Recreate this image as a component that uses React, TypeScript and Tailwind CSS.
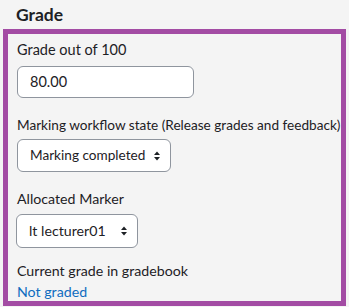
import React from "react";

function Arrows() {
  return (
    <svg width="8" height="12" viewBox="0 0 8 12" className="shrink-0">
      <path d="M4 1.5 L7 5 H1 Z" fill="#1d2125" />
      <path d="M4 10.5 L7 7 H1 Z" fill="#1d2125" />
    </svg>
  );
}

export default function App() {
  const font = { fontFamily: 'Lato, "Noto Sans", sans-serif' };
  return (
    <div className="w-[349px] h-[307px] bg-[#f4f4f4] overflow-hidden text-[#1d2125]" style={font}>
      <div className="h-[29px] pl-[16px] pt-[4px] text-[17.5px] font-bold leading-[22px]">Grade</div>
      <div className="mx-[3px] h-[277px] border-[5px] border-[#a34ca4] overflow-hidden px-[9px] pt-[5px]">
        <div className="text-[14.5px] leading-[22px]">Grade out of 100</div>
        <div className="mt-[5px] w-[177px] h-[32px] bg-white border border-[#8f959e] rounded-[6px] pl-[12px] flex items-center text-[14.5px] text-[#1d2125]">
          80.00
        </div>
        <div className="mt-[16px] text-[13.6px] leading-[22px] whitespace-nowrap">Marking workflow state (Release grades and feedback)</div>
        <div className="mt-[3px] w-[154px] h-[33px] bg-white border border-[#8f959e] rounded-[6px] pl-[12px] pr-[9px] flex items-center justify-between text-[13.6px] whitespace-nowrap">
          <span>Marking completed</span>
          <Arrows />
        </div>
        <div className="mt-[16px] text-[14.2px] leading-[22px]">Allocated Marker</div>
        <div className="mt-[4px] -ml-[1px] w-[122px] h-[34px] bg-white border border-[#8f959e] rounded-[6px] pl-[12px] pr-[9px] flex items-center justify-between text-[14.2px] whitespace-nowrap">
          <span>lt lecturer01</span>
          <Arrows />
        </div>
        <div className="mt-[12px] text-[14.2px] leading-[22px]">Current grade in gradebook</div>
        <div className="-mt-[1px] text-[14.2px] leading-[22px] text-[#0f6cbf]">Not graded</div>
      </div>
    </div>
  );
}
